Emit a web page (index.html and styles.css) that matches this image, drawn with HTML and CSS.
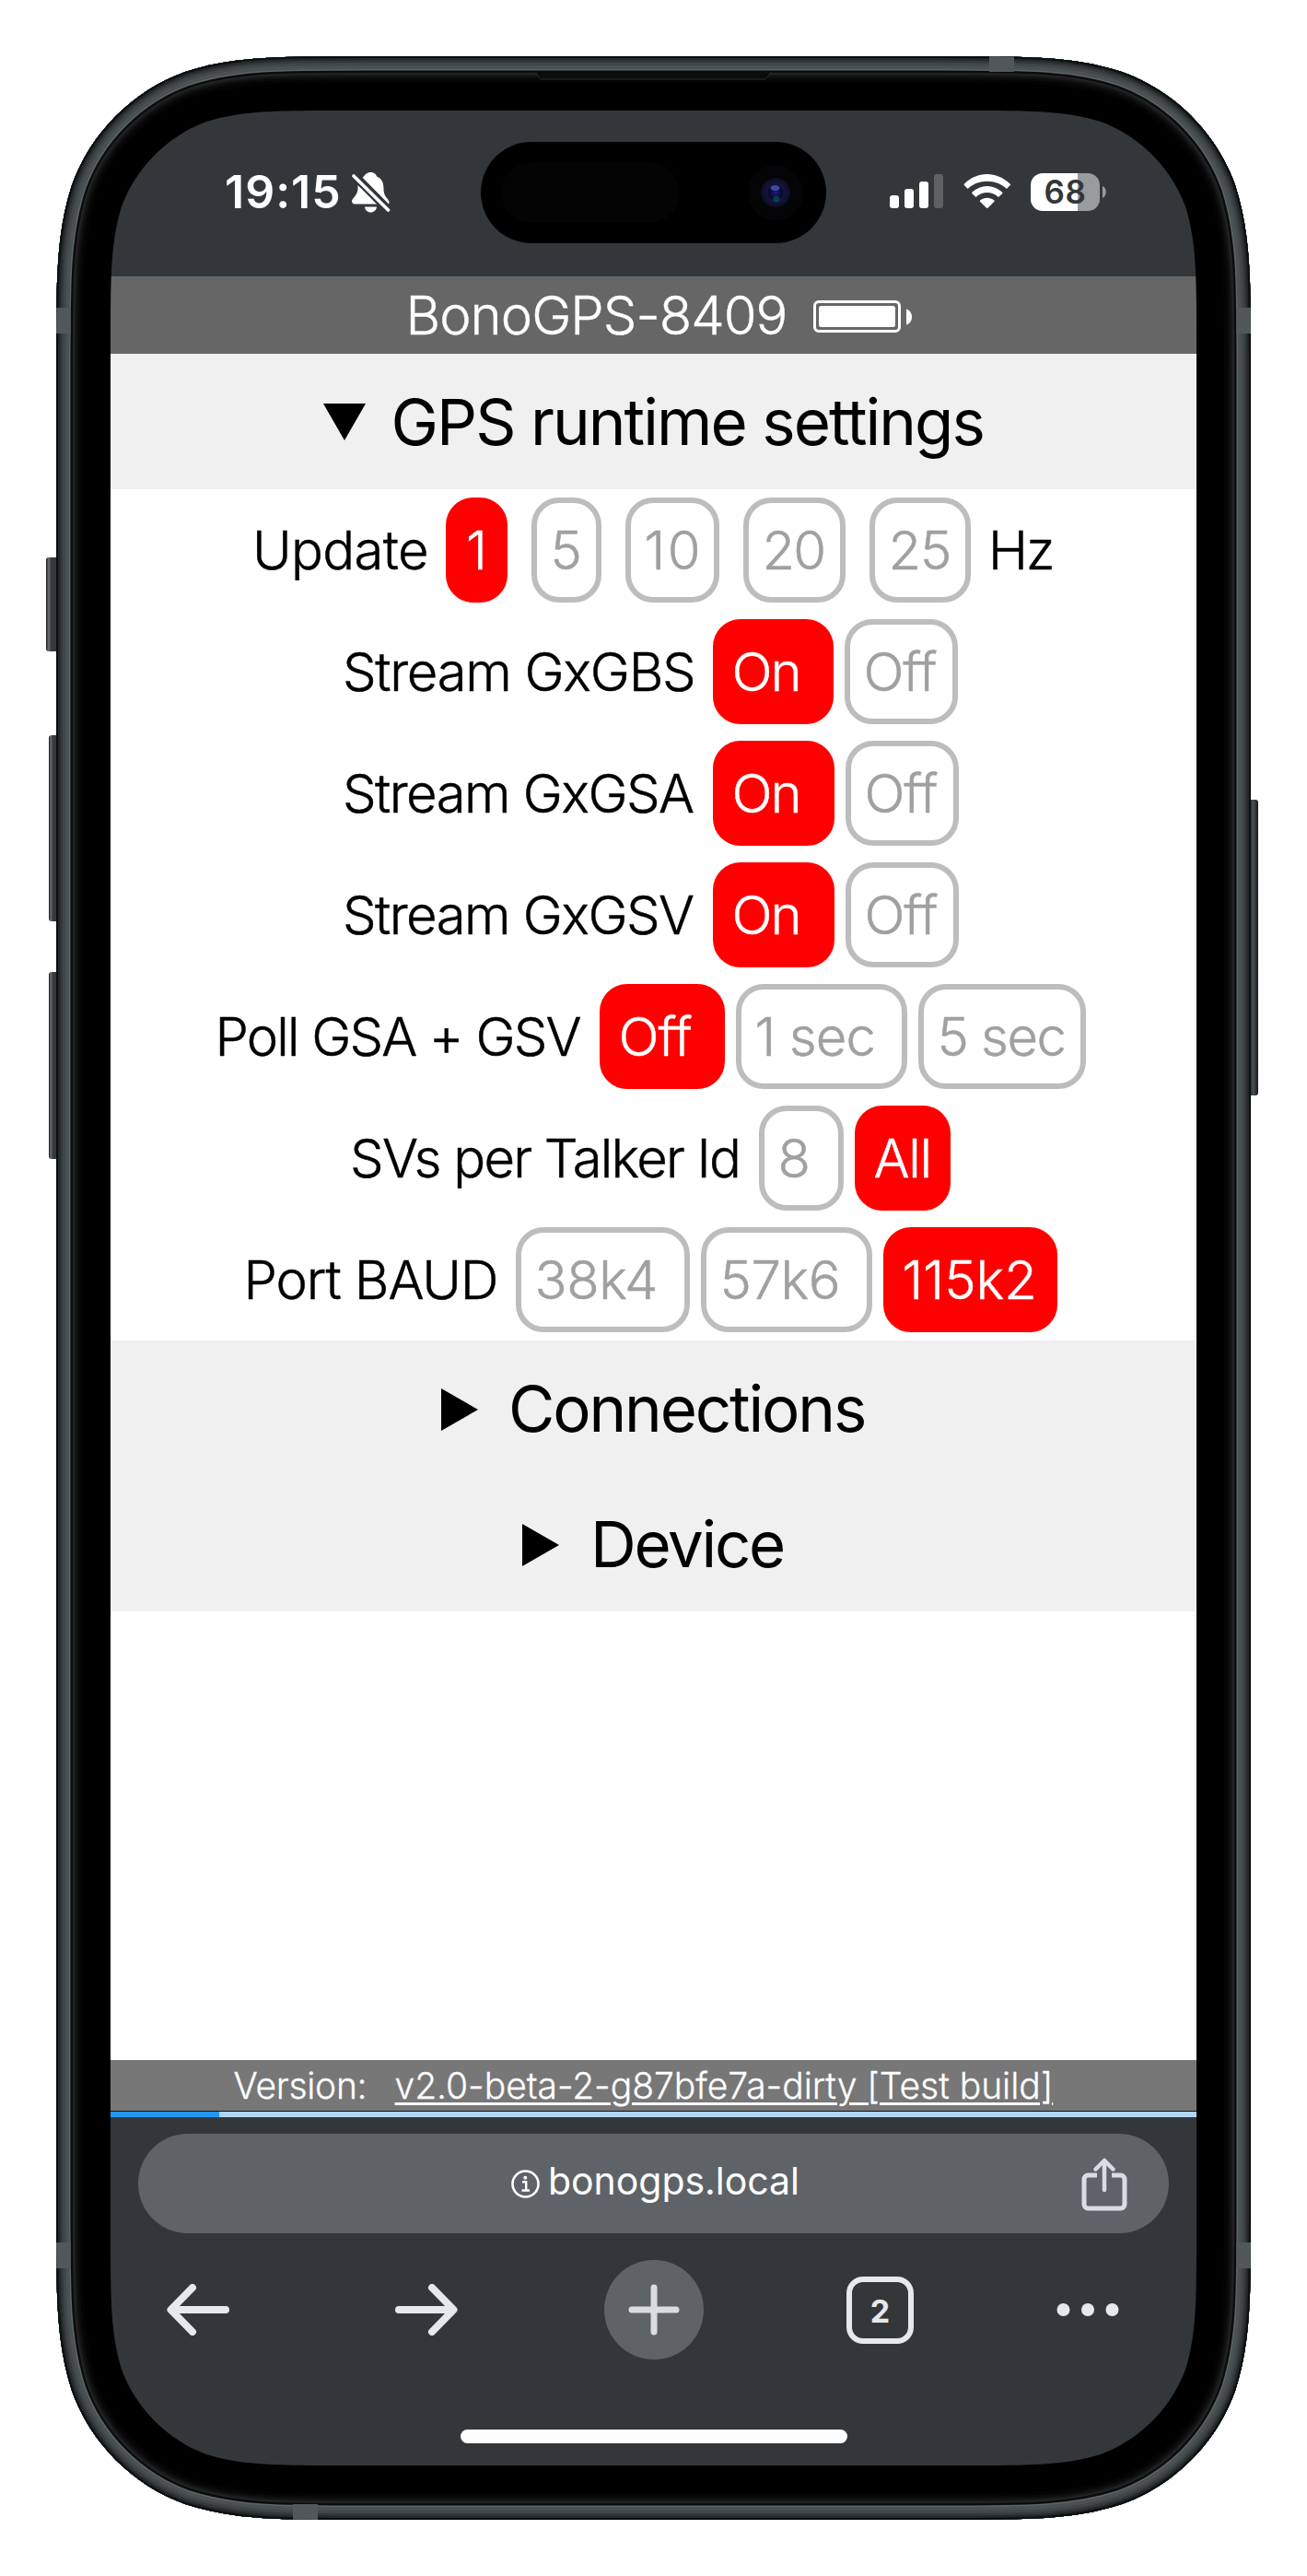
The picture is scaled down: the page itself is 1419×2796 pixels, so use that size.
FILE: index.html
```html
<!DOCTYPE html>
<html lang="en">
<head>
<meta charset="utf-8">
<title>BonoGPS-8409</title>
<link rel="stylesheet" href="styles.css">
</head>
<body>
<div class="phone">
  <main class="screen">
    <div class="status">
      <span class="clock">19:15</span>
      <svg class="bell" width="42" height="44" viewBox="0 0 42 44">
        <path fill="#fff" d="M13 4.500C15 1.500 17 0 20.500 0c4 0 6 2.500 6.500 4.500 5.500 2 7.500 7 7.500 13 0 5.500 1.500 8 3.500 10.500 1.500 2 2.500 3 2.500 4.800 0 .8-.2 1.300-.5 1.700L11.500 6z"/>
        <path fill="#fff" d="M6.500 14 29 34.500H3.500C1 34.500 0 33 0 31.500 0 28 6 26 6.500 18zM14 37.500h13c-.5 3.500-3 6-6.500 6S14.500 41 14 37.500z"/>
        <path stroke="#33373a" stroke-width="9" d="M1 1.500 39.500 41"/>
        <path stroke="#fff" stroke-width="3.600" stroke-linecap="round" d="M2 4 39.500 41"/>
      </svg>
      <svg class="signal" width="58" height="38" viewBox="0 0 58 38" fill="#fff">
        <rect y="23" width="10" height="14" rx="3"/><rect x="16" y="16" width="10" height="21" rx="3"/>
        <rect x="32" y="8" width="10" height="29" rx="3"/><rect x="48" width="10" height="37" rx="3" fill="#5f6062"/>
      </svg>
      <svg class="wifi" width="52" height="38" viewBox="0 0 52 38" fill="#fff">
        <path d="M1 10.500C15-3.500 36-3.500 50.500 10.500c.6.600.6 1.200.1 1.800l-3.800 3.800c-10.500-11-31.500-11-42 0L1 12.300c-.5-.6-.5-1.200 0-1.800z"/>
        <path d="M9.500 19.500c9.500-8.700 23-8.700 32.500 0 .6.600.6 1.200.1 1.800L38 25c-7-6.600-17.500-6.600-24.500 0l-4-3.700c-.5-.6-.5-1.200 0-1.800z"/>
        <path d="M18.300 28.300c4.200-3.400 10.700-3.400 14.900 0 .6.500.6 1.100.1 1.700l-6.600 6.600c-.7.600-1.200.6-1.900 0L18.200 30c-.5-.6-.5-1.200.1-1.700z"/>
      </svg>
      <span class="charge">68</span>
      <svg class="tip" width="4" height="13" viewBox="0 0 4 13"><path fill="#9a9b9d" d="M0 0c5 1.500 5 11 0 13z"/></svg>
    </div>

    <header class="title">
      <span class="name">BonoGPS-8409</span>
      <svg width="108" height="36" viewBox="0 0 108 36">
        <rect x="1.500" y="1.500" width="92" height="32" rx="4.500" fill="none" stroke="#fff" stroke-width="3"/>
        <rect x="6" y="6" width="83" height="23" rx="2.500" fill="#fff"/>
        <path fill="#fff" d="M101 9.500c8 2 8 15 0 17z"/>
      </svg>
    </header>

    <div class="summary gps">
      <svg width="46" height="40" viewBox="0 0 46 40"><path d="M0 0h46L23 40z"/></svg>
      <span>GPS runtime settings</span>
    </div>

    <section class="settings">
      <div class="row update"><span class="label">Update</span><a class="opt on w1">1</a><a class="opt w2">5</a><a class="opt w3">10</a><a class="opt w4">20</a><a class="opt w5">25</a><span class="unit">Hz</span></div>
      <div class="row stream gbs"><span class="label">Stream GxGBS</span><a class="opt on">On</a><a class="opt off">Off</a></div>
      <div class="row stream"><span class="label">Stream GxGSA</span><a class="opt on">On</a><a class="opt off">Off</a></div>
      <div class="row stream"><span class="label">Stream GxGSV</span><a class="opt on">On</a><a class="opt off">Off</a></div>
      <div class="row poll"><span class="label">Poll GSA + GSV</span><a class="opt on w1">Off</a><a class="opt w2">1 sec</a><a class="opt w3">5 sec</a></div>
      <div class="row svs"><span class="label">SVs per Talker Id</span><a class="opt w1">8</a><a class="opt on w2">All</a></div>
      <div class="row baud"><span class="label">Port BAUD</span><a class="opt w1">38k4</a><a class="opt w2">57k6</a><a class="opt on w3">115k2</a></div>
    </section>

    <div class="summary conn">
      <svg width="40" height="46" viewBox="0 0 40 46"><path d="M0 0v46l40-23z"/></svg>
      <span>Connections</span>
    </div>
    <div class="summary device">
      <svg width="40" height="46" viewBox="0 0 40 46"><path d="M0 0v46l40-23z"/></svg>
      <span>Device</span>
    </div>

    <footer class="version"><span class="vlabel">Version:</span><a class="vlink">v2.0-beta-2-g87bfe7a-dirty [Test build]</a></footer>

    <div class="toolbar">
      <div class="progress"><div class="bar"></div></div>
      <div class="omnibox">
        <svg class="info" width="31" height="31" viewBox="0 0 31 31" fill="none" stroke="#fff">
          <circle cx="15.500" cy="15.500" r="14" stroke-width="2.600"/>
          <path stroke-width="2.400" d="M12 13.300h4.200v9M11.500 22.500h8.500"/><circle cx="15.300" cy="8.700" r="2" fill="#fff" stroke="none"/>
        </svg>
        <span class="url">bonogps.local</span>
        <svg class="share" width="50" height="58" viewBox="0 0 50 58" fill="none" stroke="#dadce3" stroke-width="5" stroke-linecap="round" stroke-linejoin="round">
          <path d="M17 19H7.500a4.500 4.500 0 0 0-4.500 4.500v27A4.500 4.500 0 0 0 7.500 55h35a4.500 4.500 0 0 0 4.500-4.500v-27a4.500 4.500 0 0 0-4.500-4.500H33" stroke-linecap="butt"/>
          <path d="M25 35V3.500M15.500 12.500 25 3l9.500 9.500" stroke-width="4.500"/>
        </svg>
      </div>
      <nav class="nav">
        <svg class="back" width="68" height="56" viewBox="0 0 68 56"><path d="M64 28H5M28 4 4.500 28 28 52"/></svg>
        <svg class="fwd" width="68" height="56" viewBox="0 0 68 56"><path d="M4 28h59M40 4l23.500 24L40 52"/></svg>
        <span class="plus"><svg width="56" height="56" viewBox="0 0 56 56"><path d="M28 4v48M4 28h48"/></svg></span>
        <span class="tabs">2</span>
        <svg class="dots" width="68" height="14" viewBox="0 0 68 14"><circle cx="7.500" cy="7" r="7"/><circle cx="34" cy="7" r="7"/><circle cx="60.500" cy="7" r="7"/></svg>
      </nav>
      <div class="home"></div>
    </div>
  </main>

  <!-- phone shell: side keys, metal band, black bezel with a cut-out for the screen -->
  <svg class="shell" width="1419" height="2796" viewBox="0 0 1419 2796">
    <defs>
      <linearGradient id="key"><stop offset="0" stop-color="#15191a"/><stop offset=".2" stop-color="#6b7274"/><stop offset=".4" stop-color="#343a3b"/><stop offset=".8" stop-color="#343a3b"/><stop offset="1" stop-color="#080a0a"/></linearGradient>
      <linearGradient id="keyR"><stop offset="0" stop-color="#080a0a"/><stop offset=".5" stop-color="#4a5152"/><stop offset="1" stop-color="#15191a"/></linearGradient>
      <radialGradient id="lens"><stop offset="0" stop-color="#1a1c7a"/><stop offset=".45" stop-color="#07082e"/><stop offset=".6" stop-color="#14163a"/><stop offset="1" stop-color="#0c0c22"/></radialGradient>
      <path id="body" d="M400 61H1019c97 0 146 0 199 17 57 20.500 102.500 66 123 123 17 53 17 102 17 199V2396c0 97 0 146-17 199-20.500 57-66 102.500-123 123-53 17-102 17-199 17H400c-97 0-146 0-199-17-57-20.500-102.500-66-123-123-17-53-17-102-17-199V400c0-97 0-146 17-199 20.500-57 66-102.500 123-123 53-17 102-17 199-17z"/>
      <path id="hole" d="M372 120H1047c72 0 109 0 148 12 42.500 16 76 49.500 92 92 12 39 12 76 12 148V2424c0 72 0 109-12 148-16 42.500-49.500 76-92 92-39 12-76 12-148 12H372c-72 0-109 0-148-12-42.500-16-76-49.500-92-92-12-39-12-76-12-148V372c0-72 0-109 12-148 16-42.500 49.500-76 92-92 39-12 76-12 148-12z"/>
      <clipPath id="inBody"><use href="#body"/></clipPath>
      <mask id="ring"><rect width="1419" height="2796" fill="#fff"/><use href="#hole" fill="#000"/></mask>
    </defs>
    <rect x="50" y="605" width="14" height="102" rx="3" fill="url(#key)"/>
    <rect x="53" y="798" width="11" height="202" rx="3" fill="url(#key)"/>
    <rect x="53" y="1055" width="11" height="203" rx="3" fill="url(#key)"/>
    <rect x="1355" y="868" width="11" height="321" rx="3" fill="url(#keyR)"/>
    <g mask="url(#ring)"><g clip-path="url(#inBody)" fill="none">
      <use href="#body" fill="#000"/>
      <use href="#body" stroke="#040404" stroke-width="58"/>
      <use href="#body" stroke="#0a0a0a" stroke-width="51"/>
      <use href="#body" stroke="#121212" stroke-width="46"/>
      <use href="#body" stroke="#1b1b1b" stroke-width="42"/>
      <use href="#body" stroke="#242525" stroke-width="39"/>
      <use href="#body" stroke="#0a0d0e" stroke-width="36"/>
      <use href="#body" stroke="#5d6567" stroke-width="31"/>
      <use href="#body" stroke="#4a5152" stroke-width="28"/>
      <use href="#body" stroke="#414748" stroke-width="20"/>
      <use href="#body" stroke="#343a3b" stroke-width="14"/>
      <use href="#body" stroke="#23282a" stroke-width="9"/>
      <use href="#body" stroke="#0c0f10" stroke-width="4"/>
      <path fill="#525859" d="M1074 61h27v17h-27zM318 2718h27v17h-27zM61 334h16v28H61zM1342 334h16v28h-16zM61 2434h16v28H61zM1342 2434h16v28h-16z"/>
      <path fill="#0c0c0c" stroke="#2b2b2b" d="M581 78.500c3 1 3 7.500 7 7.500h242c4 0 4-6.500 7-7.500"/>
    </g></g>
    <rect x="522" y="154" width="375" height="110" rx="55"/>
    <rect x="544" y="176" width="194" height="66" rx="33" fill="#040404"/>
    <circle cx="842" cy="209" r="30" fill="#050407"/>
    <circle cx="842" cy="209" r="16" fill="url(#lens)"/>
    <ellipse cx="841.500" cy="204" rx="5" ry="3" fill="#4548a0"/>
    <circle cx="843" cy="216" r="3.500" fill="#0b3b4c"/>
  </svg>
</div>
</body>
</html>
```
FILE: styles.css
```css
* { box-sizing: border-box; }
body { margin: 0; background: #fff; font-family: Inter, sans-serif; color: #000; }
.phone { position: relative; width: 1419px; height: 2796px; padding: 120px; overflow: hidden; }
.shell { position: absolute; left: 0; top: 0; }
.screen { width: 1179px; height: 2556px; display: flex; flex-direction: column; overflow: hidden; border-radius: 125px; background: #fff; white-space: nowrap; }
svg { display: block; flex: none; }

/* status bar */
.status { height: 180px; flex: none; display: flex; align-items: center; padding: 0 0 4px 124px; background: #33373a; color: #fff; }
.clock { width: 138px; font-size: 50px; font-weight: 600; letter-spacing: 1px; }
.bell { margin-top: 2px; }
.signal { margin-left: 542px; }
.wifi { margin-left: 22px; }
.charge { width: 75px; height: 41px; margin-left: 21px; border-radius: 13px; background: linear-gradient(90deg, #fff 51px, #9a9b9d 51px); color: #33373a; font-size: 35px; font-weight: 600; line-height: 41px; text-align: center; letter-spacing: .5px; }
.tip { margin-left: 3px; }

/* page header */
.title { height: 84px; flex: none; display: flex; align-items: center; padding-left: 320.5px; background: #666; color: #fff; font-size: 58px; font-weight: 300; -webkit-text-stroke: .4px; }
.name { width: 442.5px; letter-spacing: -.98px; }
.title svg { margin-top: 4px; }

.summary { height: 147px; flex: none; display: flex; align-items: center; background: #f0f0f0; font-size: 69px; }
.summary span { padding-top: 1px; }
.gps { padding-left: 231px; letter-spacing: -1.95px; }
.gps span { margin-left: 27.5px; }
.conn { padding-left: 359px; letter-spacing: -2.14px; }
.conn span { margin-left: 33px; }
.device { padding-left: 447px; letter-spacing: -2.3px; }
.device span { margin-left: 34px; }
.conn svg, .device svg { margin-top: 2px; }

/* option rows */
.settings { flex: none; font-size: 58px; font-weight: 300; -webkit-text-stroke: .5px; }
.row { height: 132px; display: flex; align-items: center; gap: 12px; }
.opt { height: 114px; flex: none; border: 6px solid #bdbdbd; border-radius: 30px; padding-left: 14.5px; color: #a0a0a0; line-height: 102px; overflow: hidden; }
.opt.on { border-color: red; background: red; color: #fff; }

.update { padding-left: 154px; gap: 26px; }
.update .label { width: 184px; letter-spacing: -.64px; }
.update .w1 { width: 67px; padding-left: 16px; }
.update .w2 { width: 76px; }
.update .w3 { width: 102px; letter-spacing: 2.5px; }
.update .w4 { width: 111px; letter-spacing: -1.8px; }
.update .w5 { width: 110px; letter-spacing: -1px; }
.unit { margin-left: -7px; letter-spacing: -1.9px; }

.stream { padding-left: 252px; }
.stream .label { width: 390px; letter-spacing: -1.59px; }
.gbs .label { letter-spacing: -1.32px; }
.stream .on { width: 132px; letter-spacing: -2px; }
.stream .off { width: 123px; letter-spacing: -1.15px; }
.gbs .on { width: 131px; }

.poll { padding-left: 113.5px; }
.poll .label { width: 405.5px; letter-spacing: -1.85px; }
.poll .w1 { width: 136px; letter-spacing: -1px; }
.poll .w2 { width: 186px; letter-spacing: -.92px; }
.poll .w3 { width: 182px; letter-spacing: -1.57px; }

.svs { padding-left: 260px; }
.svs .label { width: 432px; letter-spacing: -1.77px; }
.svs .w1 { width: 92px; }
.svs .w2 { width: 104px; letter-spacing: -1.3px; }

.baud { padding-left: 144.5px; }
.baud .label { width: 283.5px; letter-spacing: -1.1px; }
.baud .w1 { width: 189px; letter-spacing: -.4px; }
.baud .w2 { width: 186px; letter-spacing: -.4px; }
.baud .w3 { width: 189px; letter-spacing: 0; }

/* version line */
.version { height: 56px; flex: none; margin-top: auto; display: flex; align-items: center; padding-left: 133.5px; border-bottom: 1px solid #111; background: #777; color: #fff; font-size: 39px; font-weight: 300; -webkit-text-stroke: .3px; }
.vlabel { width: 175px; letter-spacing: -.31px; }
.vlink { text-decoration: underline; text-decoration-thickness: 3px; text-underline-offset: 4px; letter-spacing: -.04px; }

/* browser toolbar */
.toolbar { height: 378px; flex: none; background: #33373a; }
.toolbar { height: 384px; }
.progress { height: 6px; background: #aed6f5; }
.bar { width: 118px; height: 6px; background: #2196f3; }
.omnibox { width: 1119px; height: 108px; margin: 18px 0 0 30px; border-radius: 54px; background: #5e6367; display: flex; align-items: center; padding-left: 405px; color: #fff; }
.url { width: 279px; margin-left: 9px; padding-bottom: 6px; font-size: 41px; letter-spacing: -.05px; }
.share { margin-left: 300px; margin-top: 2px; }
.nav { height: 108px; margin-top: 29px; display: flex; align-items: center; fill: none; stroke: #e6e9ec; stroke-width: 8; stroke-linecap: round; stroke-linejoin: round; }
.back { margin-left: 61px; }
.fwd { margin-left: 180px; }
.plus { width: 108px; height: 108px; margin-left: 159px; border-radius: 50%; background: #5e6367; display: flex; align-items: center; justify-content: center; stroke: #dadce0; stroke-width: 7; }
.tabs { width: 73px; height: 73px; margin-left: 155px; border: 6px solid #e6e9ec; border-radius: 18px; color: #e6e9ec; font-size: 34px; font-weight: 700; line-height: 63px; text-align: center; }
.dots { margin-left: 155px; fill: #e6e9ec; stroke: none; }
.home { width: 420px; height: 15px; margin: 76px 0 0 380px; border-radius: 8px; background: #fdfdfd; }
```
